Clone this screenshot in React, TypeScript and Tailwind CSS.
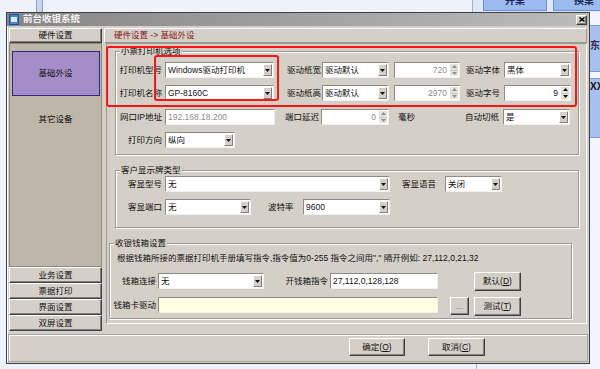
import React from "react";

const sunken =
  "border border-t-[#8e8b84] border-l-[#8e8b84] border-b-[#f2f1ee] border-r-[#f2f1ee]";
const raised =
  "border border-t-white border-l-white border-b-[#404040] border-r-[#404040] shadow-[inset_-1px_-1px_0_#808080]";
const etched =
  "border border-[#9d9a93] shadow-[inset_1px_1px_0_#ffffff,1px_1px_0_#ffffff]";

function Arrow({ up = false, gray = false }: { up?: boolean; gray?: boolean }) {
  return (
    <svg width="5" height="3" viewBox="0 0 5 3">
      <path d={up ? "M0 3h5L2.5 0z" : "M0 0h5L2.5 3z"} fill={gray ? "#8c8c8c" : "#111"} />
    </svg>
  );
}

function Combo({ className, value }: { className: string; value: string }) {
  return (
    <div className={`flex h-[16px] shrink-0 bg-white ${sunken} ${className}`}>
      <div className="flex-1 overflow-hidden whitespace-nowrap pl-[2px] leading-[14px]">{value}</div>
      <div className="m-[1px] flex w-[9px] items-center justify-center border border-t-white border-l-white border-b-[#808080] border-r-[#808080] bg-[#d4d0c8]">
        <Arrow />
      </div>
    </div>
  );
}

function Spin({ className, value, dim = false }: { className: string; value: string; dim?: boolean }) {
  return (
    <div className={`flex h-[16px] shrink-0 bg-white ${sunken} ${className}`}>
      <div className={`flex-1 pr-[2px] text-right leading-[14px] ${dim ? "text-[#8c8c8c]" : ""}`}>{value}</div>
      <div className="m-[1px] flex w-[8px] flex-col">
        <div className="flex flex-1 items-center justify-center border-b border-[#c8c6c0] bg-[#e6e4de]">
          <Arrow up gray={dim} />
        </div>
        <div className="flex flex-1 items-center justify-center bg-[#e6e4de]">
          <Arrow gray={dim} />
        </div>
      </div>
    </div>
  );
}

function Field({ className, value, dim = false }: { className: string; value: string; dim?: boolean }) {
  return (
    <div
      className={`h-[16px] shrink-0 overflow-hidden whitespace-nowrap pl-[2px] leading-[14px] ${sunken} ${
        dim ? "text-[#8c8c8c]" : ""
      } ${className}`}
    >
      {value}
    </div>
  );
}

function Label({ className = "", children }: { className?: string; children: React.ReactNode }) {
  return <div className={`shrink-0 whitespace-nowrap leading-[16px] ${className}`}>{children}</div>;
}

function Btn({ className, label, hot }: { className: string; label: string; hot?: string }) {
  return (
    <div className={`flex shrink-0 items-center justify-center bg-[#d4d0c8] ${raised} ${className}`}>
      {label}
      {hot && (
        <>
          (<span className="underline">{hot}</span>)
        </>
      )}
    </div>
  );
}

function Group({ className, title, children }: { className: string; title: string; children: React.ReactNode }) {
  return (
    <div className={`relative ${etched} ${className}`}>
      <div className="absolute left-[4px] top-[-7px] bg-[#d4d0c8] px-[1px] leading-[12px]">{title}</div>
      {children}
    </div>
  );
}

export default function App() {
  return (
    <div className="relative h-[369px] w-[600px] overflow-hidden bg-[#eef3fb] font-['Liberation_Sans','Noto_Sans_CJK_SC',sans-serif] text-[8.5px] text-[#111]">
      {/* app behind the dialog */}
      <div className="absolute left-[36px] top-0 h-[12px] w-[7px] border-x border-[#8fa1c4] bg-[#c9d5ec]" />
      <div className="absolute left-[472px] top-0 h-[12px] w-[128px] border-l border-[#9fb3d8] bg-[#dfe8f7]" />
      <div className="absolute left-[483px] top-[-10px] flex h-[21px] w-[64px] items-center justify-center border border-[#6f8fd0] bg-[#9dbaf0] text-[10px] font-bold text-[#1c2a55]">
        开桌
      </div>
      <div className="absolute left-[553px] top-[-10px] flex h-[21px] w-[62px] items-center justify-center border border-[#6f8fd0] bg-[#9dbaf0] text-[10px] font-bold text-[#1c2a55]">
        换桌
      </div>
      <div className="absolute left-[590px] top-[12px] flex h-[357px] w-[10px] flex-col bg-[#f2f5fb]">
        <div className="h-[13px]" />
        <div className="h-[47px] border-y border-[#7d9bd8] bg-[#a6c0f0] pt-[12px] text-[10px] font-bold text-[#3a2a55]">
          东
        </div>
        <div className="h-[6px]" />
        <div className="h-[60px] border-y border-[#7d9bd8] bg-[#a6c0f0] pt-[0px] text-[10px] font-bold">XX</div>
      </div>
      <div className="absolute left-[476px] top-[364px] h-[5px] w-px bg-[#a9b7cf]" />

      {/* dialog */}
      <div className="absolute left-[6px] top-[12px] flex h-[352px] w-[584px] flex-col border border-[#404040] bg-[#d4d0c8] shadow-[inset_1px_1px_0_#ffffff]">
        {/* title bar */}
        <div className="flex h-[13px] items-center bg-linear-to-r from-[#868686] to-[#bcbcbc] pl-[2px]">
          <div className="flex h-[11px] w-[10px] items-center justify-center border border-[#1f4f9a] bg-[#3d86d8]">
            <div className="h-[5px] w-[6px] bg-[#d9ecff]" />
          </div>
          <span className="ml-[4px] text-[9.5px] font-bold text-[#f4f4f4]">前台收银系统</span>
          <div className={`ml-auto mr-[2px] flex h-[10px] w-[11px] items-center justify-center bg-[#d4d0c8] ${raised}`}>
            <svg width="6" height="5" viewBox="0 0 6 5">
              <path d="M0.5 0.5L5.5 4.5M5.5 0.5L0.5 4.5" stroke="#000" strokeWidth="1.4" />
            </svg>
          </div>
        </div>

        {/* body */}
        <div className="flex h-[307px] gap-[2px] px-[2px] pt-[2px]">
          {/* left navigation */}
          <div className="flex w-[94px] flex-col">
            <div className={`flex h-[15px] items-center justify-center ${raised}`}>硬件设置</div>
            <div className="flex h-[224px] flex-col items-center border border-[#8e8a80] bg-[#bdb6a9]">
              <div className="mt-[7px] flex h-[45px] w-[88px] items-center justify-center border border-[#2d2a7e] bg-[#a48dc8]">
                基础外设
              </div>
              <div className="mt-[17px] leading-[12px]">其它设备</div>
            </div>
            {["业务设置", "票据打印", "界面设置", "双屏设置"].map((t) => (
              <div key={t} className={`flex h-[16px] items-center justify-center ${raised}`}>
                {t}
              </div>
            ))}
          </div>

          {/* right panel */}
          <div className="flex w-[483px] flex-col">
            <div className="flex h-[15px] items-center border border-t-white border-l-white border-b-[#9d9a93] border-r-[#9d9a93] pl-[9px] text-[#8b1a1a]">
              硬件设置 -&gt; 基础外设
            </div>
            <div className="ml-[2px] flex h-[281px] w-[481px] flex-col border border-t-[#9d9a93] border-l-[#9d9a93] border-b-white border-r-white">
              <Group className="ml-[8px] mt-[7px] h-[104px] w-[464px] pt-[10px]" title="小票打印机选项">
                <div className="flex">
                  <Label className="w-[46px] text-right">打印机型号</Label>
                  <Combo className="ml-[3px] w-[109px]" value="Windows驱动打印机" />
                  <Label className="w-[47px] text-right">驱动纸宽</Label>
                  <Combo className="ml-[1px] w-[67px]" value="驱动默认" />
                  <Spin className="ml-[5px] w-[66px]" value="720" dim />
                  <Label className="w-[40px] text-right">驱动字体</Label>
                  <Combo className="ml-[4px] w-[67px]" value="黑体" />
                </div>
                <div className="mt-[7px] flex">
                  <Label className="w-[46px] text-right">打印机名称</Label>
                  <Combo className="ml-[3px] w-[109px]" value="GP-8160C" />
                  <Label className="w-[47px] text-right">驱动纸高</Label>
                  <Combo className="ml-[1px] w-[67px]" value="驱动默认" />
                  <Spin className="ml-[5px] w-[66px]" value="2970" dim />
                  <Label className="w-[40px] text-right">驱动字号</Label>
                  <Spin className="ml-[4px] w-[67px]" value="9" />
                </div>
                <div className="mt-[8px] flex">
                  <Label className="w-[46px] text-right">网口IP地址</Label>
                  <Field className="ml-[3px] w-[110px] bg-white" value="192.168.18.200" dim />
                  <Label className="w-[44px] text-right">端口延迟</Label>
                  <Spin className="ml-[2px] w-[68px]" value="0" dim />
                  <Label className="ml-[9px] w-[17px]">毫秒</Label>
                  <Label className="w-[84px] text-right">自动切纸</Label>
                  <Combo className="ml-[4px] w-[67px]" value="是" />
                </div>
                <div className="mt-[7px] flex">
                  <Label className="w-[46px] text-right">打印方向</Label>
                  <Combo className="ml-[3px] w-[70px]" value="纵向" />
                </div>
              </Group>

              <Group className="ml-[8px] mt-[15px] h-[58px] w-[464px] pt-[5px]" title="客户显示牌类型">
                <div className="flex">
                  <Label className="w-[46px] text-right">客显型号</Label>
                  <Combo className="ml-[3px] w-[225px]" value="无" />
                  <Label className="w-[46px] text-right">客显语音</Label>
                  <Combo className="ml-[9px] w-[57px]" value="关闭" />
                </div>
                <div className="mt-[7px] flex">
                  <Label className="w-[46px] text-right">客显端口</Label>
                  <Combo className="ml-[3px] w-[86px]" value="无" />
                  <Label className="ml-[17px] w-[35px]">波特率</Label>
                  <Combo className="w-[87px]" value="9600" />
                </div>
              </Group>

              <Group className="ml-[2px] mt-[15px] h-[76px] w-[463px] pt-[8px]" title="收银钱箱设置">
                <div className="pl-[7px] leading-[12px]">
                  根据钱箱所接的票据打印机手册填写指令,指令值为0-255 指令之间用&quot;,&quot; 隔开例如: 27,112,0,21,32
                </div>
                <div className="mt-[8px] flex items-start">
                  <Label className="mt-[1px] w-[46px] text-right">钱箱连接</Label>
                  <Combo className="ml-[2px] mt-[1px] w-[106px]" value="无" />
                  <Label className="mt-[1px] w-[64px] text-right">开钱箱指令</Label>
                  <Field className="ml-[2px] mt-[1px] w-[108px] bg-white" value="27,112,0,128,128" />
                  <Btn className="ml-[36px] h-[19px] w-[47px]" label="默认" hot="D" />
                </div>
                <div className="mt-[6px] flex items-start">
                  <Label className="w-[46px] text-right">钱箱卡驱动</Label>
                  <Field className="ml-[2px] w-[280px] bg-[#ffffe1]" value="" />
                  <Btn className="ml-[12px] h-[18px] w-[19px] text-[#8c8c8c]" label="..." />
                  <Btn className="ml-[5px] h-[19px] w-[47px]" label="测试" hot="T" />
                </div>
              </Group>
            </div>
          </div>
        </div>

        {/* bottom buttons */}
        <div className="mx-[1px] mt-[1px] flex h-[28px] border border-[#a8a49c] pl-[340px] pt-[3px] shadow-[inset_1px_1px_0_#ffffff]">
          <Btn className="h-[18px] w-[56px]" label="确定" hot="O" />
          <Btn className="ml-[23px] h-[18px] w-[57px]" label="取消" hot="C" />
        </div>
      </div>

      {/* red annotation boxes */}
      <div className="absolute left-[106px] top-[46px] h-[61px] w-[471px] rounded-[3px] border-2 border-[#ff1414]" />
      <div className="absolute left-[154px] top-[55px] h-[46px] w-[125px] rounded-[3px] border-2 border-[#ff1414]" />
    </div>
  );
}
